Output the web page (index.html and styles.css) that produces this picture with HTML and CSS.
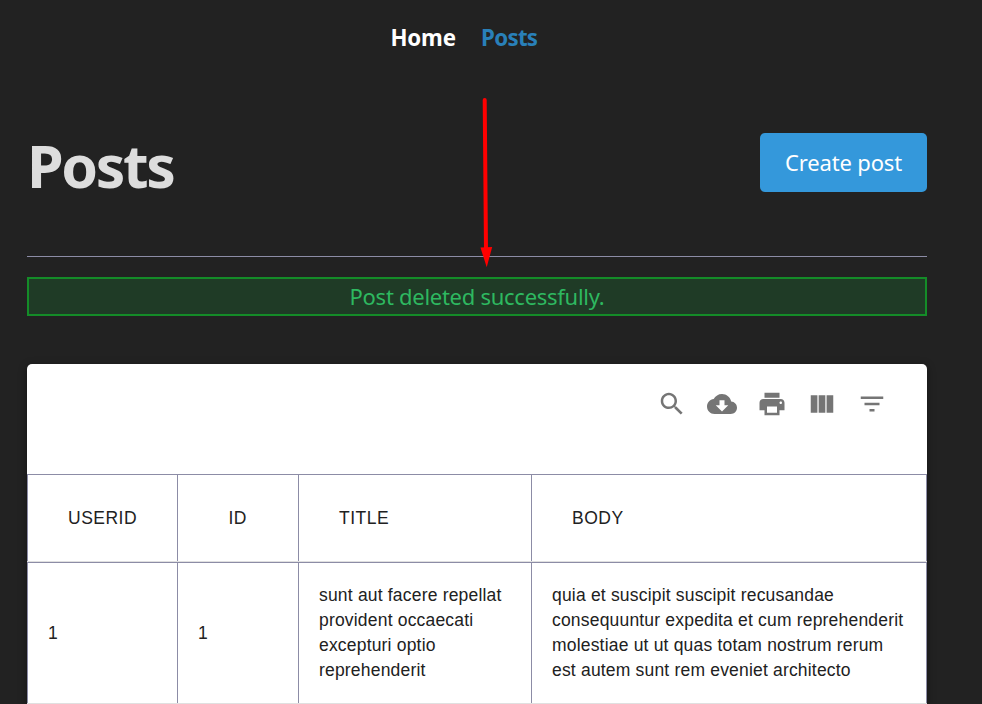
FILE: index.html
```html
<!DOCTYPE html>
<html lang="en">
<head>
<meta charset="utf-8">
<title>Posts</title>
<link rel="stylesheet" href="styles.css">
</head>
<body>
<nav class="nav">
  <a class="nav-link home">Home</a>
  <a class="nav-link active">Posts</a>
</nav>
<main class="page">
  <header class="page-header">
    <h1 class="title">Posts</h1>
    <button class="create"><span class="create-label">Create post</span></button>
  </header>
  <div class="alert"><span class="alert-text">Post deleted successfully.</span></div>
  <section class="card">
    <div class="toolbar">
      <svg class="icon" viewBox="0 0 24 24"><path d="M15.5 14h-.79l-.28-.27C15.41 12.59 16 11.11 16 9.5 16 5.91 13.09 3 9.5 3S3 5.91 3 9.5 5.91 16 9.5 16c1.61 0 3.09-.59 4.23-1.57l.27.28v.79l5 4.99L20.49 19l-4.99-5zm-6 0C7.01 14 5 11.99 5 9.5S7.01 5 9.5 5 14 7.01 14 9.5 11.99 14 9.5 14z"/></svg>
      <svg class="icon" viewBox="0 0 24 24"><path d="M19.35 10.04C18.67 6.59 15.64 4 12 4 9.11 4 6.6 5.64 5.35 8.04 2.34 8.36 0 10.91 0 14c0 3.31 2.69 6 6 6h13c2.76 0 5-2.24 5-5 0-2.64-2.05-4.78-4.65-4.96zM17 13l-5 5-5-5h3V9h4v4h3z"/></svg>
      <svg class="icon" viewBox="0 0 24 24"><path d="M19 8H5c-1.66 0-3 1.34-3 3v6h4v4h12v-4h4v-6c0-1.66-1.34-3-3-3zm-3 11H8v-5h8v5zm3-7c-.55 0-1-.45-1-1s.45-1 1-1 1 .45 1 1-.45 1-1 1zm-1-9H6v4h12V3z"/></svg>
      <svg class="icon" viewBox="0 0 24 24"><path d="M14.67 5v14H9.33V5h5.34zm1 14H21V5h-5.33v14zm-7.34 0V5H3v14h5.33z"/></svg>
      <svg class="icon" viewBox="0 0 24 24"><path d="M10 18h4v-2h-4v2zM3 6v2h18V6H3zm3 7h12v-2H6v2z"/></svg>
    </div>
    <div class="row head">
      <div class="cell">USERID</div>
      <div class="cell">ID</div>
      <div class="cell">TITLE</div>
      <div class="cell">BODY</div>
    </div>
    <div class="row">
      <div class="cell">1</div>
      <div class="cell">1</div>
      <div class="cell">sunt aut facere repellat<br>provident occaecati<br>excepturi optio<br>reprehenderit</div>
      <div class="cell">quia et suscipit suscipit recusandae<br>consequuntur expedita et cum reprehenderit<br>molestiae ut ut quas totam nostrum rerum<br>est autem sunt rem eveniet architecto</div>
    </div>
  </section>
</main>
<svg class="arrow" viewBox="0 0 20 176"><path class="shaft" d="M7.7 7L9 158"/><path class="tip" d="M3.5 154.5L15.2 154L9.7 174.3Z"/></svg>
</body>
</html>
```
FILE: styles.css
```css
* { box-sizing: border-box; }
body {
  margin: 0;
  height: 704px;
  overflow: hidden;
  background: #222;
  font-family: "Noto Sans", "Open Sans", sans-serif;
}
.nav {
  display: flex;
  gap: 25px;
  height: 76px;
  padding-left: 390.5px;
  align-items: center;
}
.nav-link {
  width: 65.5px;
  font-size: 22.3px;
  line-height: 30px;
  font-weight: 700;
  letter-spacing: -.2px;
  white-space: nowrap;
  color: #fff;
}
.nav-link.active {
  color: #2980b9;
  letter-spacing: -.7px;
}
.page { width: 900px; margin-left: 27px; }
.page-header {
  display: flex;
  justify-content: space-between;
  height: 181px;
  padding-top: 57px;
  border-bottom: 1px solid #8c8ca6;
}
.title {
  margin: -2px 0 0;
  font-size: 59px;
  line-height: 68px;
  font-weight: 700;
  letter-spacing: -2.4px;
  color: #ddd;
}
.create {
  width: 167px;
  height: 59px;
  padding: 0 0 2px;
  border: 0;
  border-radius: 5px;
  background: #3498db;
  color: #fff;
  font: 22px/30px "Noto Sans", "Open Sans", sans-serif;
  letter-spacing: -.15px;
  white-space: nowrap;
}
.alert {
  height: 39px;
  margin-top: 20px;
  border: 2px solid #148c28;
  background: #1f3b26;
  color: #2eb860;
  font-size: 22px;
  line-height: 35px;
  letter-spacing: -.27px;
  text-align: center;
  white-space: nowrap;
}
.card {
  margin-top: 48px;
  border-radius: 5px 5px 0 0;
  background: #fff;
  box-shadow: 0 2px 8px rgba(0, 0, 0, .4);
}
.toolbar {
  display: flex;
  justify-content: flex-end;
  gap: 20px;
  height: 110px;
  padding: 25px 40px 0 0;
}
.icon { width: 30px; height: 30px; fill: #757575; }
.row {
  display: grid;
  grid-template-columns: 150px 121px 233px 396px;
  height: 142px;
  border-top: 1px solid #8c8ca6;
  border-bottom: 1px solid #e0e0e0;
  font-family: "Liberation Sans", Arial, sans-serif;
  font-size: 17.5px;
  line-height: 25px;
  letter-spacing: .01071em;
  color: #212121;
}
.row.head {
  height: 88px;
  letter-spacing: .02857em;
}
.cell {
  display: flex;
  align-items: center;
  padding-left: 20px;
  border-left: 1px solid #8c8ca6;
  white-space: nowrap;
}
.cell:last-child { border-right: 1px solid #8c8ca6; }
.head .cell { padding-left: 40px; }
.head .cell:nth-child(2) { padding-left: 50.5px; }
.arrow {
  position: absolute;
  left: 477px;
  top: 93px;
  width: 20px;
  height: 176px;
}
.shaft { fill: none; stroke: #f00; stroke-width: 4; stroke-linecap: round; }
.tip { fill: #f00; }
```
